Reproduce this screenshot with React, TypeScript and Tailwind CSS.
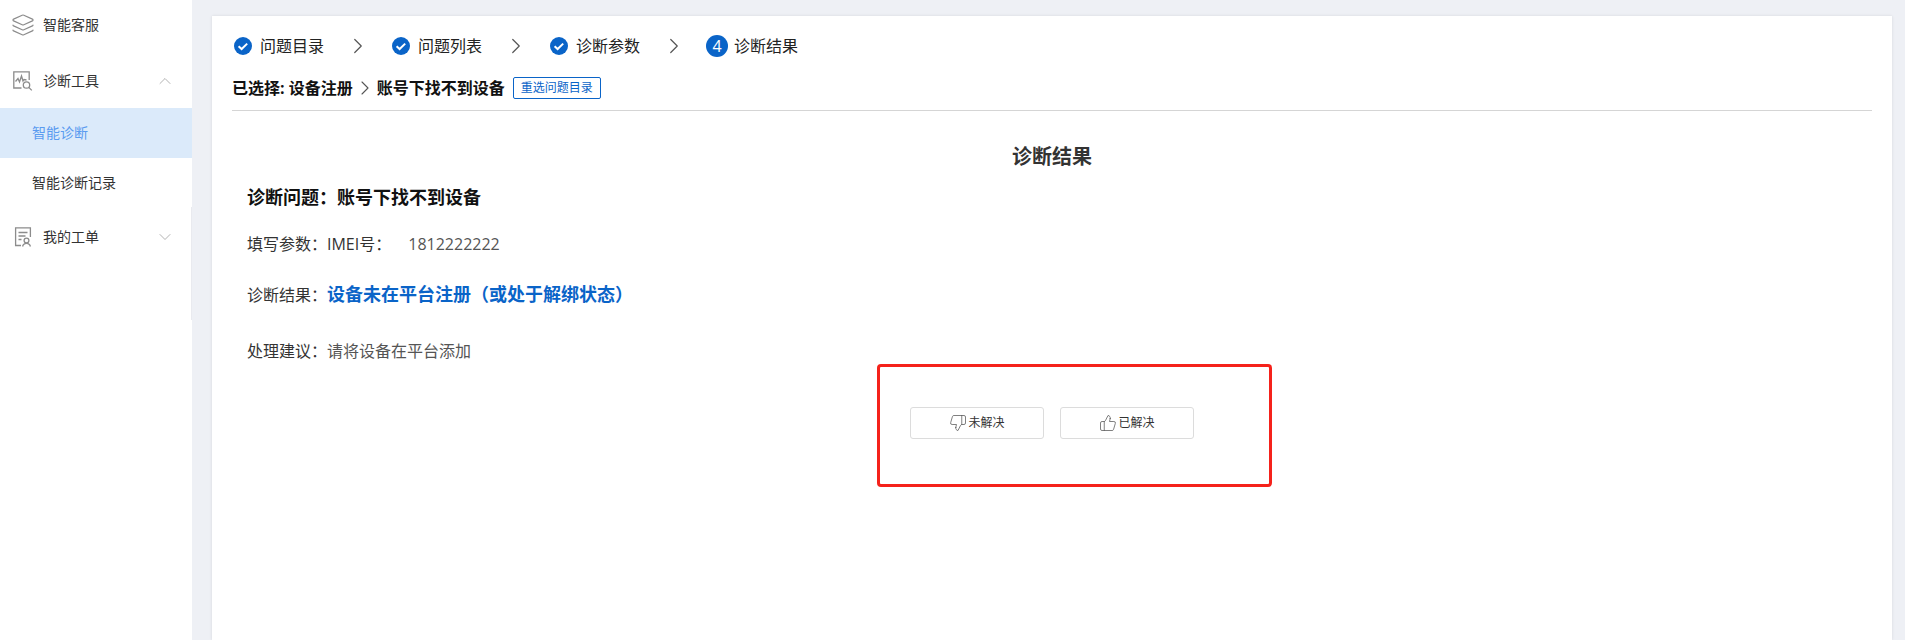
import React from 'react';
import { ChevronDown, ChevronRight, ChevronUp, Layers, ThumbsDown, ThumbsUp } from 'lucide-react';

const font = "font-['Open_Sans','Noto_Sans_CJK_SC',sans-serif]";

const CheckCircle = () => (
  <svg width="18" height="18" viewBox="0 0 18 18" className="shrink-0">
    <circle cx="9" cy="9" r="9" fill="#0a64c8" />
    <path d="M4.6 9.2l3 2.8 5.6-5.4" fill="none" stroke="#fff" strokeWidth="2" />
  </svg>
);

const ChartSearchIcon = () => (
  <svg width="20" height="20" viewBox="0 0 20 20" fill="none" stroke="#8c8c8c" strokeWidth="1.3" className="shrink-0">
    <path d="M8.5 17H.8V.8h15.4V9" />
    <path d="M2.5 10.5l2.5-3 1.5 3.5 2-6 1.5 5 1-1.5 2.5.5" />
    <circle cx="13.5" cy="14" r="3.2" />
    <path d="M15.8 16.4l3 3" />
  </svg>
);

const TicketIcon = () => (
  <svg width="20" height="20" viewBox="0 0 20 20" fill="none" stroke="#8c8c8c" strokeWidth="1.3" className="shrink-0">
    <path d="M8 18.5H2.6V.8h14.8V10" />
    <path d="M5.5 5.5h9M5.5 9h7M5.5 12.5h3" />
    <circle cx="13.5" cy="13.5" r="2.4" />
    <path d="M9.6 19.5c.4-2 1.9-3.2 3.9-3.2s3.5 1.2 3.9 3.2" />
  </svg>
);

const Sidebar = () => (
  <aside className="relative w-[192px] h-full shrink-0 bg-white text-sm text-[#333]">
    <div className="h-[50px] flex items-center pl-[11px]">
      <Layers size={24} strokeWidth={1.2} color="#8c8c8c" />
      <span className="ml-[8px]">智能客服</span>
    </div>
    <div className="h-[58px] pt-[4px] flex items-center pl-[13px] pr-[17px]">
      <ChartSearchIcon />
      <span className="ml-[10px] flex-1">诊断工具</span>
      <ChevronUp size={20} strokeWidth={0.9} color="#999" />
    </div>
    <div className="h-[50px] flex items-center pl-[32px] bg-[#dbeafa] text-[#5a9bf0]">智能诊断</div>
    <div className="h-[50px] flex items-center pl-[32px]">智能诊断记录</div>
    <div className="h-[58px] flex items-center pl-[13px] pr-[17px]">
      <TicketIcon />
      <span className="ml-[10px] flex-1">我的工单</span>
      <ChevronDown size={20} strokeWidth={0.9} color="#999" />
    </div>
    <div className="absolute right-0 top-[207px] h-[113px] w-px bg-[#e9eaef]" />
  </aside>
);

const Step = ({ label, num }: { label: string; num?: number }) => (
  <div className={`flex items-center text-base text-[#222] ${num ? 'gap-[6px] ml-[-2px]' : 'gap-[8px]'}`}>
    {num ? (
      <span className="w-[22px] h-[22px] rounded-full bg-[#0a64c8] text-white text-base flex items-center justify-center">{num}</span>
    ) : (
      <CheckCircle />
    )}
    <span>{label}</span>
  </div>
);

const Arrow = () => <ChevronRight size={26} strokeWidth={1.1} color="#555" className="mx-[21px]" />;

export default function App() {
  return (
    <div className={`${font} h-[640px] w-[1905px] flex bg-[#eef0f5] overflow-hidden`}>
      <Sidebar />
      <main className="flex-1 mt-[16px] ml-[20px] mr-[13px] bg-white px-[20px] shadow-[0_0_3px_rgba(0,0,0,0.1)]">
        {/* Steps */}
        <div className="h-[60px] flex items-center pl-[2px]">
          <Step label="问题目录" />
          <Arrow />
          <Step label="问题列表" />
          <Arrow />
          <Step label="诊断参数" />
          <Arrow />
          <Step label="诊断结果" num={4} />
        </div>
        <div className="border-b border-[#d5d5d5] pb-[10px]">
          <div className="h-[24px] flex items-center">
            <span className="text-base font-bold text-[#111]">已选择: 设备注册</span>
            <ChevronRight size={24} strokeWidth={1.1} color="#555" />
            <span className="text-base font-bold text-[#111]">账号下找不到设备</span>
            <button className="ml-[8px] h-[22px] w-[88px] border border-[#0a64c8] rounded-[2px] text-xs text-[#0a64c8]">重选问题目录</button>
          </div>
        </div>

        <h2 className="mt-[32px] text-center text-[20px] font-bold text-[#333] leading-[28px]">诊断结果</h2>
        <div className="pl-[15px]">
          <p className="mt-[14px] text-[18px] leading-[24px] font-bold text-[#111]">诊断问题：账号下找不到设备</p>
          <p className="mt-[23px] text-base leading-[24px] text-[#333]">
            填写参数：IMEI号：<span className="ml-[17px] text-[#555]">1812222222</span>
          </p>
          <p className="mt-[26px] text-base leading-[24px] text-[#333]">
            诊断结果：<span className="text-[18px] font-bold text-[#0a64c8]">设备未在平台注册（或处于解绑状态）</span>
          </p>
          <p className="mt-[32px] text-base leading-[24px] text-[#333]">
            处理建议：<span className="text-[#555]">请将设备在平台添加</span>
          </p>
        </div>

        {/* Actions */}
        <div className="ml-[645px] mt-[1px] w-[395px] h-[123px] border-[3px] border-[#f5221b] rounded-[4px] pl-[30px] pt-[40px] flex gap-[16px] items-start">
          <button className="w-[134px] h-[32px] border border-[#dcdcdc] rounded-[3px] flex items-center justify-center gap-[1px] text-xs text-[#333]">
            <ThumbsDown size={18} strokeWidth={1} color="#555" />
            未解决
          </button>
          <button className="w-[134px] h-[32px] border border-[#dcdcdc] rounded-[3px] flex items-center justify-center gap-[1px] text-xs text-[#333]">
            <ThumbsUp size={18} strokeWidth={1} color="#555" />
            已解决
          </button>
        </div>
      </main>
    </div>
  );
}
